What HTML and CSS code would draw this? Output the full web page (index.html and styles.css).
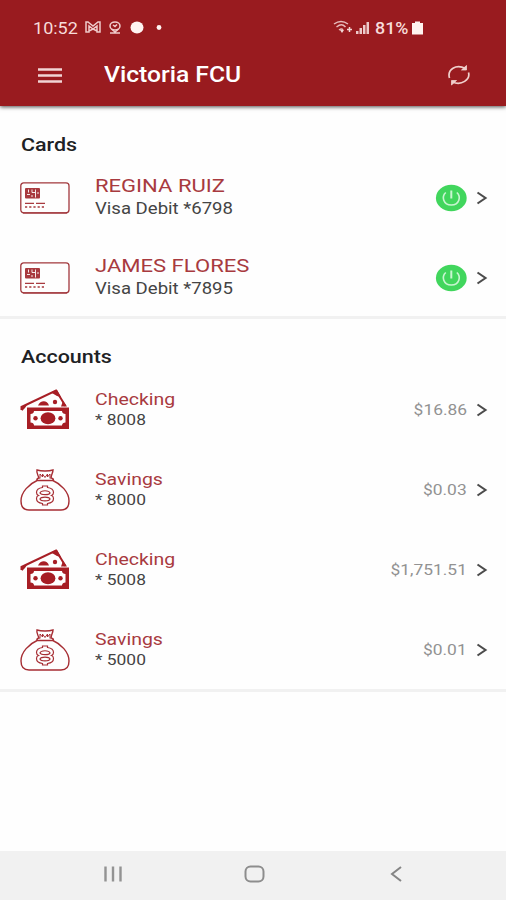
FILE: index.html
```html
<!DOCTYPE html>
<html lang="en">
<head>
<meta charset="utf-8">
<title>Victoria FCU</title>
<link rel="stylesheet" href="styles.css">
</head>
<body>
<svg class="defs" width="0" height="0" aria-hidden="true">
  <symbol id="card" viewBox="0 0 50 42">
    <rect x="0.800" y="5.800" width="48.200" height="30" rx="3" fill="none" stroke="#a2383d" stroke-width="1.300"/>
    <path d="M3 36H47" stroke="#99272d" stroke-width="1"/>
    <rect x="5" y="11" width="15" height="10.500" rx="1" fill="#a83a3f"/>
    <path d="M8.500 12.500v3M7 17.500h3M12 12.500v3h3M12 18v2M15.500 12.500v8M17 16h2" fill="none" stroke="#fff" stroke-width=".9"/>
    <path d="M5 26.400h9M16 26.400h9" stroke="#a83a3f" stroke-width="1.300"/>
    <path d="M5 30h20" stroke="#a83a3f" stroke-width="1.300" stroke-dasharray="2.200 2"/>
  </symbol>
  <symbol id="cash" viewBox="0 0 50 42">
    <path d="M1.500 21V18L36 1.500 45.500 17" fill="none" stroke="#a71e25" stroke-width="2"/>
    <path d="M31 3.500 37 .8 41 8 37 7zM1 18l6-2-2 3-3 3zM43 12l4 5.500h-6z" fill="#a71e25"/>
    <path d="M18 16.500c2-5 9-6 11 0z" fill="#a71e25"/>
    <circle cx="35" cy="13" r="2.200" fill="#a71e25"/>
    <rect x="7" y="18.500" width="42" height="21.500" fill="#a71e25"/>
    <path d="M14 22H42c0 2 1.500 3 3.500 3v8.500c-2 0-3.500 1-3.500 3H14c0-2-1.500-3-3.500-3V25c2 0 3.500-1 3.500-3z" fill="#fff"/>
    <ellipse cx="28" cy="29.200" rx="7.400" ry="6" fill="#a71e25"/>
    <circle cx="15.500" cy="29.200" r="2.200" fill="#a71e25"/><circle cx="40.500" cy="29.200" r="2.200" fill="#a71e25"/>
  </symbol>
  <symbol id="bag" viewBox="0 0 50 42">
    <g fill="none" stroke="#a62d33" stroke-width="1.400">
      <path d="M18 11C9 15 1 23 1 32c0 6 3 9 8 9h32c5 0 8-3 8-9 0-9-8-17-17-21"/>
      <path d="M18 11.500c-2-1-1-2 1-2.500-1-3-3-5-2-8 3 1 5 1 8 1s5 0 8-1c0 3-2 5-2 8 3 .5 3 2 1 2.500z"/>
      <path d="M20 9.500V5l2.500 3V5L25 8.500 27.500 5v3L30 5v4.500" stroke-width="1"/>
      <path d="M22.500 17h5v1.500c3.500.5 6 2.500 6 5 0 1.500-1 2.500-2 3 1.500.5 2 1.500 2 3 0 2.500-2.500 4.500-6 5V36h-5v-1.500c-3.500-.5-6-2.500-6-5 0-1.500.5-2.500 2-3-1-.5-2-1.500-2-3 0-2.500 2.500-4.500 6-5z" stroke-width="1.200"/>
      <path d="M20 24c1-3 9-3 10 0-1 2.500-9 2-10 0zM20 30c1-2.500 9-2.500 10 0-1 2.500-9 2.500-10 0z" stroke-width="1.200"/>
    </g>
  </symbol>
  <symbol id="power" viewBox="0 0 32 28">
    <ellipse cx="16.300" cy="14" rx="15.400" ry="13.200" fill="#41d65d"/>
    <path d="M10.800 8.500c-4.500 4-2.700 12.500 5.500 12.500s10-8.500 5.500-12.500" fill="none" stroke="#c9f5d1" stroke-width="1.600"/>
    <path d="M16.300 6.500v8" stroke="#c9f5d1" stroke-width="2"/>
  </symbol>
  <symbol id="chevron" viewBox="0 0 12 14">
    <path d="M1.500 1.500 9.500 7l-8 5.500" fill="none" stroke="#4c4c4c" stroke-width="2.100"/>
  </symbol>
</svg>
<div class="app">
  <header class="header">
    <div class="status">
      <span class="time"><span class="txt">10:52</span></span>
      <svg class="status-left" viewBox="84 18 80 20" width="80" height="20">
        <g fill="none" stroke="#f0cccc" stroke-width="1.500">
          <path d="M86 22v10h3v-6l4 3 4-3v6h3V22h-2l-5 4-5-4zM89 31l4-2 4 2"/>
          <ellipse cx="115" cy="26" rx="5" ry="4"/><path d="M111.500 29l3.500 3 3.500-3M110 33h10M113 25l2 1.500 2-2"/>
        </g>
        <ellipse cx="137" cy="27.500" rx="6.500" ry="6" fill="#fff4f2"/><circle cx="159" cy="27.500" r="2.400" fill="#fff4f2"/>
      </svg>
      <svg class="status-signal" viewBox="332 18 40 20" width="40" height="20">
        <g fill="none" stroke="#e7bdbd" stroke-width="1.500"><path d="M334 24c5-3.500 9-3.500 14 0M336.500 27c4-3 6-3 9 0M339 30c2-1.500 3-1.500 4 0"/><path d="M349.500 27v5M347 29.500h5" stroke="#f2d8d6"/></g>
        <path d="M340 30h4l-2 3z" fill="#f2d8d6"/>
        <path d="M356 34v-3h2.500v3zM359.500 34v-6h2.500v6zM363 34v-9h2.500v9zM366.500 34V22h2.500v12z" fill="#edcaca"/>
      </svg>
      <span class="battery-text"><span class="txt">81%</span></span>
      <svg viewBox="0 0 12 14" width="12" height="14"><path d="M0 2h3V.5h5V2h3v11.500H0z" fill="#fff4ef"/></svg>
    </div>
    <div class="toolbar">
      <svg class="menu" viewBox="0 0 24 16" width="24" height="16"><path d="M0 2.500h24M0 8.500h24M0 14.500h24" stroke="#f1d5d5" stroke-width="2.300"/></svg>
      <h1><span class="txt">Victoria FCU</span></h1>
      <svg class="refresh" viewBox="0 0 24 22" width="24" height="22">
        <path d="M2.500 14C0 5.500 9-.5 18.500 4.500M21.500 8.500c2 7-7 13.500-16 9.500" fill="none" stroke="#f0d0cc" stroke-width="1.700"/>
        <path d="M19.500 1.500V6h-5zM4.500 21v-4.500h5z" fill="#f0d0cc" stroke="#f0d0cc" stroke-width=".8"/>
      </svg>
    </div>
  </header>
  <main>
    <section class="cards">
      <h2><span class="txt">Cards</span></h2>
      <div class="row"><svg class="icon"><use href="#card"/></svg><div class="info"><div class="name"><span class="txt">REGINA RUIZ</span></div><div class="detail"><span class="txt">Visa Debit *6798</span></div></div><svg class="power"><use href="#power"/></svg><svg class="chevron"><use href="#chevron"/></svg></div>
      <div class="row"><svg class="icon"><use href="#card"/></svg><div class="info"><div class="name"><span class="txt">JAMES FLORES</span></div><div class="detail"><span class="txt">Visa Debit *7895</span></div></div><svg class="power"><use href="#power"/></svg><svg class="chevron"><use href="#chevron"/></svg></div>
    </section>
    <section class="accounts">
      <h2><span class="txt">Accounts</span></h2>
      <div class="row"><svg class="icon"><use href="#cash"/></svg><div class="info"><div class="name"><span class="txt">Checking</span></div><div class="detail"><span class="txt">* 8008</span></div></div><div class="amount"><span class="txt">$16.86</span></div><svg class="chevron"><use href="#chevron"/></svg></div>
      <div class="row"><svg class="icon"><use href="#bag"/></svg><div class="info"><div class="name"><span class="txt">Savings</span></div><div class="detail"><span class="txt">* 8000</span></div></div><div class="amount"><span class="txt">$0.03</span></div><svg class="chevron"><use href="#chevron"/></svg></div>
      <div class="row"><svg class="icon"><use href="#cash"/></svg><div class="info"><div class="name"><span class="txt">Checking</span></div><div class="detail"><span class="txt">* 5008</span></div></div><div class="amount"><span class="txt">$1,751.51</span></div><svg class="chevron"><use href="#chevron"/></svg></div>
      <div class="row"><svg class="icon"><use href="#bag"/></svg><div class="info"><div class="name"><span class="txt">Savings</span></div><div class="detail"><span class="txt">* 5000</span></div></div><div class="amount"><span class="txt">$0.01</span></div><svg class="chevron"><use href="#chevron"/></svg></div>
    </section>
  </main>
  <nav class="navbar">
    <svg viewBox="0 0 20 20" width="20" height="20"><path d="M2.500 2.500v15M10 2.500v15M17.500 2.500v15" stroke="#939393" stroke-width="2.400"/></svg>
    <svg viewBox="0 0 22 20" width="22" height="20"><rect x="1.500" y="2.500" width="18" height="15" rx="5" fill="none" stroke="#8d8d8d" stroke-width="2"/></svg>
    <svg viewBox="0 0 12 18" width="12" height="18"><path d="M11 2 2 9l9 7" fill="none" stroke="#858585" stroke-width="2"/></svg>
  </nav>
</div>
</body>
</html>
```

FILE: styles.css
```css
* { box-sizing: border-box; }
body { margin: 0; background: #fff; font-family: Roboto, "Liberation Sans", sans-serif; }
.defs { display: block; }
.app { display: flex; flex-direction: column; width: 506px; height: 900px; overflow: hidden; background: #fefefe; }
svg { flex: none; }
.txt { display: inline-block; white-space: nowrap; transform: scaleX(1.16); transform-origin: left center; }
h1, h2 { margin: 0; font-weight: 500; }
.header { flex: none; height: 106px; background: #991b1f; box-shadow: 0 1px 4px rgba(0, 0, 0, .7); color: #fff; }
.status { display: flex; align-items: center; height: 56px; padding-left: 33px; font-size: 17px; color: #f7dcda; }
.time { width: 51px; }
.time .txt { transform: scaleX(1.06); }
.status-signal { margin-left: 168px; }
.battery-text { width: 37px; margin-left: 3px; font-weight: 500; }
.battery-text .txt { transform: scaleX(1.05); }
.toolbar { display: flex; align-items: center; height: 38px; padding: 0 35px 0 38px; }
h1 { flex: 1; margin-left: 42px; font-size: 22px; line-height: 26px; }
h1 .txt { transform: scaleX(1.12); }
main { flex: 1; }
.cards, .accounts { padding: 0 18px 0 20px; border-bottom: 3px solid #f1f1f1; }
.cards { height: 213px; padding-top: 27px; }
.accounts { height: 373px; padding-top: 26px; }
h2 { height: 24px; padding-left: .5px; font-size: 18.500px; line-height: 24px; color: #202124; }
.row { display: flex; align-items: center; height: 80px; }
.cards .row:nth-of-type(1), .accounts .row:nth-of-type(1) { margin-top: 1px; }
.icon { width: 50px; height: 42px; }
.info { flex: 1; margin-left: 24.500px; padding-bottom: 2px; }
.name { font-size: 17px; line-height: 22px; color: #a83a3f; }
.detail { font-size: 15px; line-height: 20px; color: #444; }
.cards .info { padding-bottom: 3px; }
.cards .name { font-size: 19px; line-height: 24px; }
.cards .detail { font-size: 16px; line-height: 22px; }
.accounts .name .txt { transform: scaleX(1.145); }
.amount { margin-right: 9px; font-size: 15px; color: #929292; }
.amount .txt { transform-origin: right center; }
.power { width: 32px; height: 28px; margin-right: 9px; }
.chevron { width: 12px; height: 14px; }
.navbar { display: flex; flex: none; align-items: center; height: 49px; padding: 0 0 3px 103px; background: #f1f1f1; }
.navbar svg:nth-child(2) { margin-left: 121px; }
.navbar svg:nth-child(3) { margin-left: 124px; }
```
